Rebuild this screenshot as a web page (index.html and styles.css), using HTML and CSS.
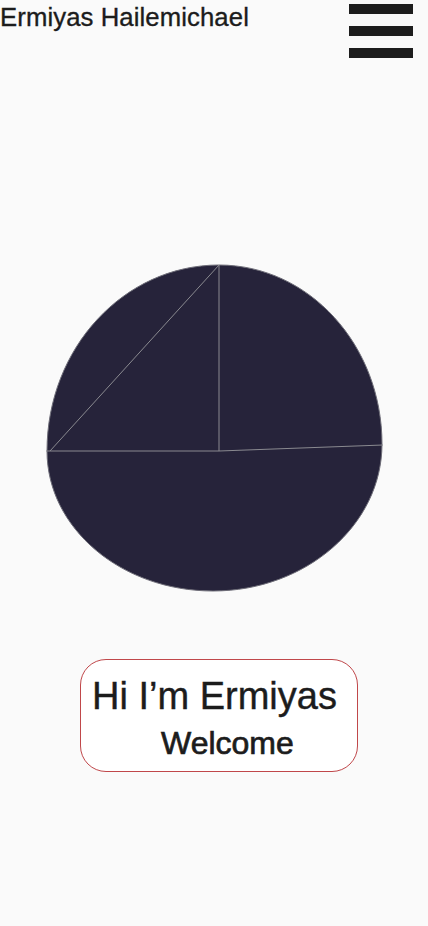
FILE: index.html
```html
<!DOCTYPE html>
<html>
<head>
<meta charset="utf-8">
<link rel="stylesheet" href="styles.css">
</head>
<body>
<header class="top">
  <div class="name">Ermiyas Hailemichael</div>
  <div class="burger"><span></span><span></span><span></span></div>
</header>
<main class="main">
  <svg class="pie" width="428" height="380" viewBox="0 240 428 380">
    <path d="M219 265 C 309 265 382 345 382 444 C 382 525 306 591 213 591 C 121 591 47 528 47 451 C 47 348 124 265 219 265 Z" fill="#26233a" stroke="#6e6d78" stroke-width="1"/>
    <g stroke="#8a8a90" stroke-width="1" fill="none">
      <line x1="219" y1="265" x2="219" y2="451"/>
      <line x1="46" y1="451" x2="219" y2="451"/>
      <line x1="219" y1="451" x2="383" y2="445"/>
      <line x1="219" y1="265" x2="50" y2="451"/>
    </g>
  </svg>
  <section class="card">
    <div class="hi">Hi I’m Ermiyas</div>
    <div class="welcome">Welcome</div>
  </section>
</main>
</body>
</html>
```
FILE: styles.css
```css
html, body {
  margin: 0;
  padding: 0;
  background: #fafafa;
}
body {
  font-family: "Liberation Sans", Arial, sans-serif;
  color: #1c1c1c;
  width: 428px;
  height: 926px;
  overflow: hidden;
}
.top {
  display: flex;
  justify-content: space-between;
  align-items: flex-start;
  height: 240px;
}
.name {
  font-size: 25.7px;
  line-height: 30px;
  margin-top: 2px;
  letter-spacing: 0.1px;
  -webkit-text-stroke: 0.35px #1c1c1c;
}
.burger {
  display: flex;
  flex-direction: column;
  gap: 12px;
  margin-top: 4px;
  margin-right: 15px;
}
.burger span {
  display: block;
  width: 64px;
  height: 10px;
  background: #1d1d1d;
}
.main {
  display: flex;
  flex-direction: column;
}
.pie {
  display: block;
}
.card {
  margin-top: 39px;
  margin-left: 80px;
  width: 276px;
  height: 111px;
  border: 1px solid #c0474a;
  border-radius: 26px;
  background: #ffffff;
  box-sizing: content-box;
}
.hi {
  font-size: 38px;
  line-height: 44px;
  margin-top: 14px;
  margin-left: 11px;
  -webkit-text-stroke: 0.4px #1c1c1c;
}
.welcome {
  font-size: 32px;
  line-height: 36px;
  margin-top: 7px;
  margin-left: 80px;
  -webkit-text-stroke: 0.7px #1c1c1c;
}
```
